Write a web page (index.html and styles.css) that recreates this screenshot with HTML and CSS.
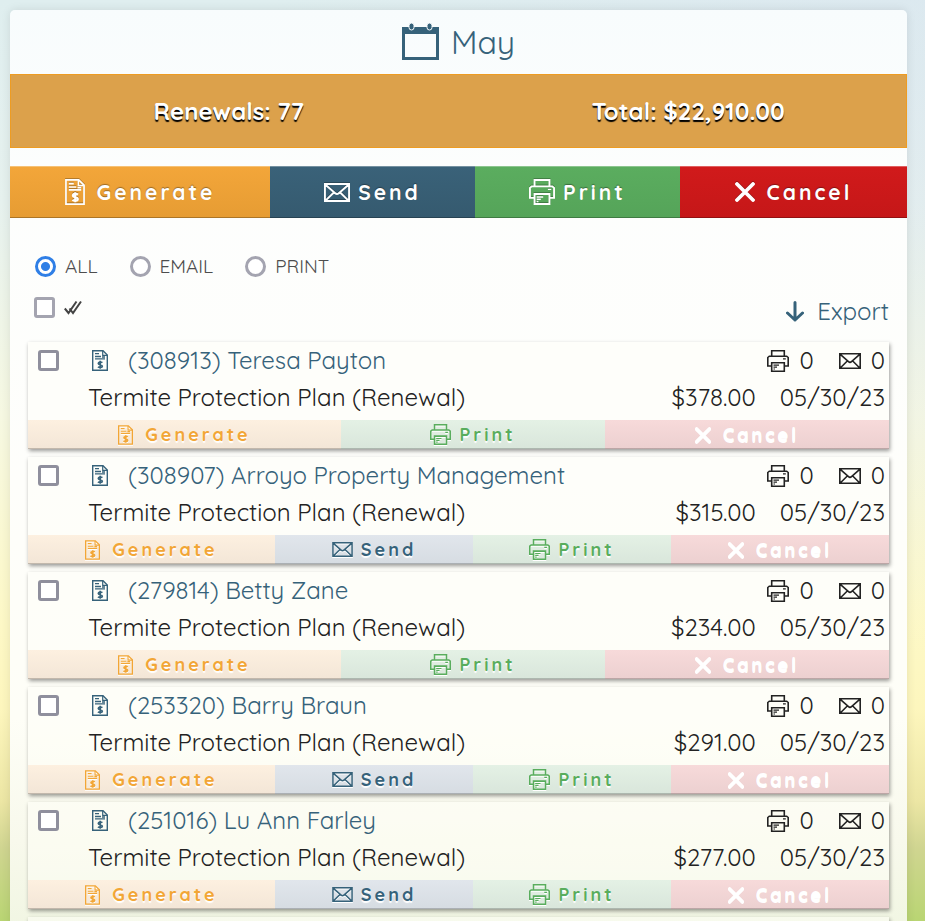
FILE: index.html
```
<!DOCTYPE html>
<html lang="en">
<head>
<meta charset="utf-8">
<title>May Renewals</title>
<link rel="stylesheet" href="styles.css">
</head>
<body>
<svg class="sprite" aria-hidden="true">
  <symbol id="calendar" viewBox="0 0 37 37">
    <path fill="currentColor" fill-rule="evenodd" d="M0 4H37V37H0ZM3 11V34H34V11Z"/>
    <rect x="7" y="0" width="5" height="7" rx="2.500" fill="currentColor" stroke="#f9fcfd" stroke-width="1"/>
    <rect x="25" y="0" width="5" height="7" rx="2.500" fill="currentColor" stroke="#f9fcfd" stroke-width="1"/>
  </symbol>
  <symbol id="invoice" viewBox="0 0 16 21">
    <path fill="none" stroke="currentColor" stroke-width="1.400" d="M.7.7H11L15.300 5V20.300H.7Z"/>
    <path fill="none" stroke="currentColor" stroke-width="1.200" d="M10.700 1V5.300H15"/>
    <path fill="none" stroke="currentColor" stroke-width="1.300" d="M3 3.700H7M3 6.500H9M10 7H13M3 8.800H13"/>
    <path fill="none" stroke="currentColor" stroke-width="1.700" d="M10.400 12.600C9.300 11.700 6.300 11.700 6.300 13.400C6.300 15.200 10.300 14.300 10.300 16.200C10.300 17.900 7.100 17.800 5.900 16.900M8.200 10.700V18.800"/>
  </symbol>
  <symbol id="envelope" viewBox="0 0 22 16">
    <path fill="none" stroke="currentColor" stroke-width="1.600" d="M.8.8H21.200V15.200H.8ZM1 1.200L9.500 8.700Q11 10 12.500 8.700L21 1.200M1.500 14.700L8.300 8M20.500 14.700L13.700 8"/>
  </symbol>
  <symbol id="printer" viewBox="0 0 22 22">
    <path fill="none" stroke="currentColor" stroke-width="1.600" d="M4.700 6V.8H17.300V6M4.700 16H.8V7.500L2.300 6.200H19.700L21.200 7.500V16H17.300M4.700 12.700H17.300V21.200H4.700Z"/>
    <path fill="none" stroke="currentColor" stroke-width="1.200" d="M16 8.800H18.800M6.500 15.200H12M6.500 17.200H10M6.500 19H8"/>
  </symbol>
  <symbol id="cross" viewBox="0 0 20 20">
    <path fill="none" stroke="currentColor" stroke-width="3.800" stroke-linecap="round" d="M2 2L18 18M18 2L2 18"/>
  </symbol>
  <symbol id="checks" viewBox="0 0 18 15">
    <path fill="none" stroke="currentColor" stroke-width="2" d="M.8 8.500L4.500 13L12.500 1.500M5.500 8.500L9 13L17 1.500"/>
  </symbol>
  <symbol id="arrow" viewBox="0 0 18 21">
    <path fill="none" stroke="currentColor" stroke-width="3" stroke-linecap="round" stroke-linejoin="round" d="M9 1.500V19M1.500 12L9 19L16.500 12"/>
  </symbol>
</svg>

<main class="panel">
  <h1 class="title"><svg class="icon-calendar"><use href="#calendar"/></svg>May</h1>
  <div class="stats"><span>Renewals: 77</span><span>Total: $22,910.00</span></div>
  <div class="toolbar">
    <button class="btn generate"><svg class="icon-invoice"><use href="#invoice"/></svg>Generate</button>
    <button class="btn send"><svg class="icon-envelope"><use href="#envelope"/></svg>Send</button>
    <button class="btn print"><svg class="icon-printer"><use href="#printer"/></svg>Print</button>
    <button class="btn cancel"><svg class="icon-cross"><use href="#cross"/></svg>Cancel</button>
  </div>
  <div class="filters">
    <label><input type="radio" name="method" checked>ALL</label>
    <label><input type="radio" name="method">EMAIL</label>
    <label><input type="radio" name="method">PRINT</label>
  </div>
  <div class="bulk">
    <label aria-label="Select all"><input type="checkbox"><svg class="icon-checks"><use href="#checks"/></svg></label>
    <a class="export" href="#"><svg class="icon-arrow"><use href="#arrow"/></svg>Export</a>
  </div>
  <div class="list" id="list"></div>
</main>
<script src="renewals.js"></script>
</body>
</html>
```
FILE: styles.css
```
* { box-sizing: border-box; }

body {
  margin: 0;
  height: 100vh;
  overflow: hidden;
  padding: 10px 18px 0 10px;
  font: 400 24px/37px Quicksand, "Open Sans", sans-serif;
  color: #222;
  background:
    radial-gradient(circle at 100% 0, rgba(215, 225, 240, .4), transparent 50%),
    linear-gradient(#dfeeef 0, #e6f1ee 22%, #f6f8e2 45%, #fdf8c6 68%, #fdf6bd 77%, #ece6a4 87%, #d0d591 92%, #b9d573 100%);
}

.sprite { position: absolute; width: 0; height: 0; }
svg { flex: none; }

.panel {
  min-height: 100%;
  border-radius: 5px 5px 0 0;
  background: linear-gradient(#f8fcfd 0, #fdfefd 20%, #fefefb 50%, #fefef7 75%, #f8f9ec 88%, #eff5e0 100%);
  box-shadow: 0 0 10px rgba(0, 0, 0, .1);
}

.title {
  display: flex;
  justify-content: center;
  align-items: center;
  gap: 12px;
  height: 64px;
  margin: 0;
  font-size: 32px;
  font-weight: 400;
  color: #36627a;
}
.icon-calendar { width: 37px; height: 37px; margin-bottom: 2px; }

.stats {
  display: grid;
  grid-template-columns: 1fr 1fr;
  column-gap: 24px;
  justify-items: center;
  align-items: center;
  height: 74px;
  border: 1px solid #ee9c22;
  background: #dca14b;
  color: #fff;
  font-weight: 700;
  text-shadow: 0 2px 1px #000;
}

.toolbar { display: flex; margin-top: 18px; }

.btn {
  display: flex;
  justify-content: center;
  align-items: center;
  flex: 205 1 0;
  height: 52px;
  gap: 8px;
  margin: 0;
  padding: 0;
  border: 0;
  box-shadow: inset 0 1px rgba(255, 255, 255, .3), inset 0 -1px rgba(0, 0, 0, .25);
  font: inherit;
  font-size: 21px;
  font-weight: 700;
  letter-spacing: 3px;
  color: #fff;
  text-shadow: 0 -1px 1px rgba(0, 0, 0, .35);
  cursor: pointer;
}
.toolbar svg { filter: drop-shadow(0 -1px 0 rgba(0, 0, 0, .25)); }
.btn.generate { flex-grow: 260; background: linear-gradient(#f3a63a, #e69c33); }
.btn.send { background: linear-gradient(#3a6279, #355a6f); }
.btn.print { background: linear-gradient(#5bad5f, #55a459); }
.btn.cancel { flex-grow: 227; background: linear-gradient(#d11a1b, #c51718); }
.toolbar .icon-invoice { width: 20px; height: 26px; margin-right: 4px; }
.toolbar .icon-envelope { width: 26px; height: 19px; }
.toolbar .icon-printer { width: 26px; height: 26px; }
.toolbar .icon-cross { width: 20px; height: 20px; margin-right: 4px; }

input {
  appearance: none;
  flex: none;
  width: 21px;
  height: 21px;
  margin: 0;
  border: 3px solid #8f8f9d;
  border-radius: 3px;
  background: #fff;
}
input[type="radio"] { border-radius: 50%; }
input[type="radio"]:checked {
  border-color: #2f7fe6;
  background: radial-gradient(circle, #2f7fe6 4px, #fff 5px);
}
.filters input, .bulk input { border-color: #a4a4b0; }

.filters {
  display: flex;
  gap: 32px;
  margin: 30px 25px 0;
  font-size: 19px;
  line-height: 36px;
  color: #4d4d4d;
}
.filters label { display: flex; align-items: center; gap: 9px; }

.bulk {
  display: flex;
  justify-content: space-between;
  align-items: center;
  height: 54px;
  margin: 0 18px 0 24px;
}
.bulk label { display: flex; align-items: center; gap: 9px; padding-bottom: 8px; color: #444; }
.icon-checks { width: 18px; height: 15px; }
.export {
  display: flex;
  align-items: center;
  gap: 13px;
  color: #36627a;
  text-decoration: none;
}
.icon-arrow { width: 18px; height: 21px; }

.list {
  display: grid;
  gap: 8px;
  margin: 4px 18px 0;
}

.card {
  background: rgba(255, 255, 248, .45);
  box-shadow: 1px 2px 4px rgba(0, 0, 0, .4);
}
.line { display: flex; align-items: center; padding-right: 4px; }
.line:nth-child(2) { padding: 0 4px 4px 60px; }
.line input { margin: 0 33px 0 10px; }
.name {
  display: flex;
  align-items: center;
  gap: 20px;
  color: #36627a;
  text-decoration: none;
}
.name svg { width: 16px; height: 21px; }
.count { display: flex; align-items: center; gap: 10px; margin-left: 25px; }
.line .push { margin-left: auto; }
.count .icon-printer { width: 22px; height: 22px; }
.count .icon-envelope { width: 22px; height: 16px; }
.date { margin-left: 24px; }

.actions { display: flex; }
.actions .btn {
  flex-grow: 198;
  height: 29px;
  font-size: 18px;
  line-height: 29px;
  box-shadow: inset 0 -1px rgba(0, 0, 0, .2);
  text-shadow: 0 2px 1px #fff;
}
.actions svg { filter: drop-shadow(0 1px 0 #fff); }
.actions .btn.generate { flex-grow: 247; color: #f2a636; background: linear-gradient(#fdf0e0, #f3e6d7); }
.actions .btn.send { color: #36627a; background: linear-gradient(#e1e6ec, #d6dce2); }
.actions .btn.print { color: #59ad5d; background: linear-gradient(#e4f1e5, #d9e6db); }
.actions .btn.cancel {
  flex-grow: 218;
  color: #fff;
  background: linear-gradient(#f7dada, #ecd0d0);
  text-shadow: 0 1px 0 #fff, 0 2px 0 #fff;
}
.actions.no-send .btn.generate { flex-grow: 313; }
.actions.no-send .btn.print { flex-grow: 264; }
.actions.no-send .btn.cancel { flex-grow: 284; }
.actions .icon-invoice { width: 15px; height: 20px; margin-right: 4px; }
.actions .icon-envelope { width: 21px; height: 15px; }
.actions .icon-printer { width: 21px; height: 21px; }
.actions .icon-cross { width: 16px; height: 16px; margin-right: 4px; }
```
FILE: renewals.js
```
const renewals = [
  { id: 308913, name: "Teresa Payton", price: "$378.00", send: false },
  { id: 308907, name: "Arroyo Property Management", price: "$315.00", send: true },
  { id: 279814, name: "Betty Zane", price: "$234.00", send: false },
  { id: 253320, name: "Barry Braun", price: "$291.00", send: true },
  { id: 251016, name: "Lu Ann Farley", price: "$277.00", send: true }
];

const icon = (name) => `<svg class="icon-${name}"><use href="#${name}"/></svg>`;
const button = (kind, name, label) => `<button class="btn ${kind}">${icon(name)}${label}</button>`;

document.getElementById("list").innerHTML = renewals.map((r) => `
  <article class="card">
    <div class="line">
      <input type="checkbox" aria-label="Select ${r.name}">
      <a class="name" href="#">${icon("invoice")}<span>(${r.id}) ${r.name}</span></a>
      <span class="count push">${icon("printer")}0</span>
      <span class="count">${icon("envelope")}0</span>
    </div>
    <div class="line">
      <span>Termite Protection Plan (Renewal)</span>
      <span class="push">${r.price}</span>
      <span class="date">05/30/23</span>
    </div>
    <div class="actions ${r.send ? "" : "no-send"}">
      ${button("generate", "invoice", "Generate")}
      ${r.send ? button("send", "envelope", "Send") : ""}
      ${button("print", "printer", "Print")}
      ${button("cancel", "cross", "Cancel")}
    </div>
  </article>`).join("") + '<article class="card"><div class="line">&nbsp;</div></article>';
```
